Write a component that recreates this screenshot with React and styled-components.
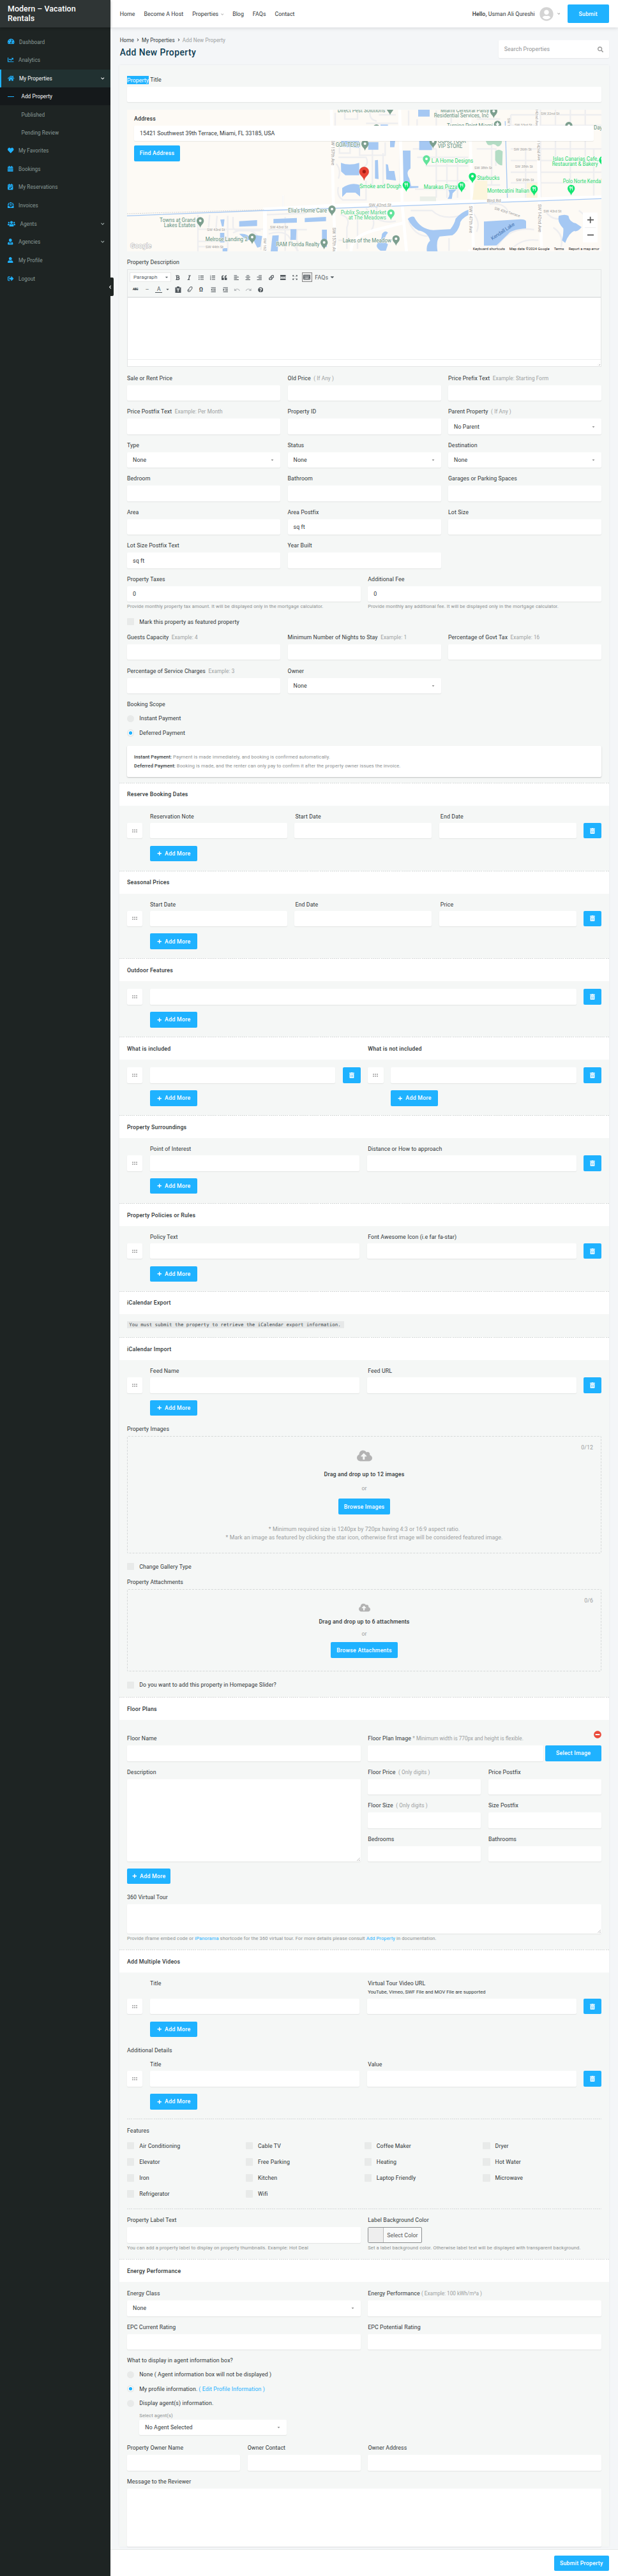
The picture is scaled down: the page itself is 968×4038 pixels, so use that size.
import React from "react";
import styled, { createGlobalStyle, css } from "styled-components";
import {
  FaTachometerAlt, FaChartLine, FaHome, FaHeart, FaCalendarAlt, FaCalendarCheck, FaEnvelopeOpenText,
  FaUsers, FaUserTie, FaUser, FaSignOutAlt, FaSearch, FaCloudUploadAlt, FaTrashAlt, FaPlus,
  FaMinusCircle, FaUserCircle, FaChevronDown, FaChevronRight, FaChevronLeft, FaBold, FaItalic,
  FaListUl, FaListOl, FaQuoteLeft, FaAlignLeft, FaAlignCenter, FaAlignRight, FaLink, FaCaretDown,
  FaOutdent, FaIndent, FaQuestionCircle, FaKeyboard,
} from "react-icons/fa";
import { MdUndo, MdRedo, MdOutlineZoomOutMap } from "react-icons/md";

const blue = "#1fb2ff";
const ink = "#303638";
const mute = "#9b9e9f";

const Global = createGlobalStyle`
  *{box-sizing:border-box}
  body{margin:0;background:#f4f6f8;font-family:Roboto,"Liberation Sans",sans-serif;font-size:8.8px;letter-spacing:.1px;color:${ink}}
  button,input,textarea{font:inherit;letter-spacing:inherit;margin:0}
`;

const Page = styled.div`display:flex;width:968px;height:4038px;overflow:hidden;`;

/* Sidebar */
const Sidebar = styled.aside`position:relative;width:173px;flex:none;background:#1e2423;color:#8b9d9a;font-size:8.2px;letter-spacing:.08px;`;
const Brand = styled.div`height:43px;padding:7px 12px 0;background:#2f3535;color:#fff;font-size:12.4px;font-weight:500;line-height:14.6px;letter-spacing:.06px;box-shadow:0 1px 4px rgba(0,0,0,.3);`;
const Menu = styled.nav`padding-top:8.3px;`;
const MenuItem = styled.div`
  display:flex;align-items:center;height:28.67px;padding:0 9.5px 0 12px;
  svg:first-child{color:${blue};width:${(p) => p.$iw || 9}px;height:9.5px;margin-right:${(p) => p.$gap || 8}px;margin-top:-1px}
  ${(p) => p.$on && css`background:#213131;color:#fff;border-left:2px solid ${blue};padding-left:10px;`}
`;
const MenuCaret = styled(FaChevronDown)`width:5.5px;height:6px;margin-left:auto;color:${(p) => p.color || "#a9b7b5"};`;
const SubItem = styled.div`
  display:flex;align-items:center;height:28.2px;padding-left:33.5px;
  ${(p) => p.$on && css`background:#15191b;color:#fff;padding-left:12px;&::before{content:"";width:10px;height:1px;background:${blue};margin-right:11.5px}`}
`;
const Collapse = styled.div`position:absolute;left:168px;top:435px;width:10px;height:29px;background:#1e2423;border-radius:0 2px 2px 0;color:#fff;display:flex;align-items:center;padding-left:1.5px;svg{width:5px;height:6px}`;

/* Top bar */
const Main = styled.main`flex:1;min-width:0;display:flex;flex-direction:column;`;
const TopBar = styled.header`height:43px;flex:none;background:#fff;box-shadow:0 1px 6px rgba(0,0,0,.13);display:flex;align-items:center;padding:0 14.3px 0 14.7px;letter-spacing:.06px;`;
const TopLinks = styled.nav`display:flex;gap:13.9px;svg{width:4.5px;height:5px;margin-left:3.5px;color:#aaa}`;
const Account = styled.div`display:flex;align-items:center;margin-left:auto;b{font-weight:500}svg{color:#d4d4d4;width:22px;height:22px;margin:0 6px 0 7px}svg+svg{width:4.5px;height:5px;color:#999;margin:0 11.5px 0 0}`;
const Button = styled.button`
  display:inline-flex;align-items:center;justify-content:center;border:0;border-radius:2px;background:${blue};color:#fff;
  font-weight:500;letter-spacing:.24px;height:${(p) => p.$h || 24.5}px;width:${(p) => p.$w}px;margin-top:${(p) => p.$mt || 0}px;flex:none;padding:0;
  svg{width:7.5px;height:7.5px;margin-right:5px}
`;
const PageHead = styled.div`display:flex;justify-content:space-between;height:59px;flex:none;padding:14px 14.3px 0 14.7px;`;
const Crumbs = styled.div`display:flex;align-items:center;height:11px;font-size:8.2px;letter-spacing:.08px;span{color:${mute}}svg{width:4px;height:5px;margin:0 4px}`;
const Title = styled.h1`margin:5px 0 0;font-size:13.9px;line-height:18px;font-weight:500;color:#0c3c52;letter-spacing:.42px;`;
const Search = styled.div`width:173px;height:28px;margin-top:6px;background:#fff;border-radius:2px;box-shadow:0 1px 2px rgba(0,0,0,.07);display:flex;align-items:center;justify-content:space-between;padding:0 9px;color:#8f9293;svg{width:9px;height:9px;color:#999}`;

/* Form card */
const Card = styled.section`width:767px;margin-left:14px;padding-top:16px;background:#f5f7f6;box-shadow:0 0 3px rgba(0,0,0,.06);`;
const Body = styled.div`padding:0 12px;`;
const Label = styled.div`
  height:14px;line-height:14px;margin-bottom:${(p) => (p.$mb === undefined ? 4 : p.$mb)}px;margin-top:${(p) => p.$mt || 0}px;
  padding-left:${(p) => p.$pl || 0}px;white-space:nowrap;
  small{font-size:8.2px;color:${mute};margin-left:${(p) => (p.$tight ? 2.3 : 4.5)}px;letter-spacing:${(p) => (p.$tight ? 0 : 0.11)}px}
`;
const Mark = styled.span`background:${blue};color:#fff;padding:1.5px 0;`;
const surface = css`background:#fff;border:0;border-radius:2px;box-shadow:0 1px 1.5px rgba(0,0,0,.08);`;
const Box = styled.div`${surface}height:${(p) => p.$h || 24.3}px;width:100%;padding:0 9px;display:flex;align-items:center;justify-content:space-between;position:relative;svg{width:5px;height:6px;color:#8a8a8a;margin-right:1px}`;
const Grip = styled.i`position:absolute;right:1px;bottom:1px;width:5px;height:5px;background:repeating-linear-gradient(135deg,transparent 0 1.3px,#aaa 1.3px 2px);clip-path:polygon(100% 0,100% 100%,0 100%);`;
const Columns = styled.div`display:grid;grid-template-columns:${(p) => p.$cols};column-gap:11.5px;row-gap:10.2px;margin-top:${(p) => (p.$mt === undefined ? 10.2 : p.$mt)}px;`;
const Note = styled.div`height:12px;line-height:12px;margin-top:2.3px;font-size:7.56px;letter-spacing:.12px;color:#8b8f90;white-space:nowrap;a{color:${blue}}`;
const Choice = styled.div`
  display:flex;align-items:center;height:12px;margin-top:${(p) => p.$mt || 0}px;white-space:nowrap;a{color:${blue};margin-left:2px}
  &::before{content:"";width:11.4px;height:11.4px;margin-right:7.8px;background:#e8eae9;border-radius:${(p) => (p.$round ? "50%" : "1px")};
  ${(p) => p.$on && css`background:radial-gradient(circle,${blue} 0 2.4px,#fff 2.9px 3.5px,#e8eae9 4.1px);`}}
`;
const InfoBox = styled.div`${surface}box-shadow:0 1px 2px rgba(0,0,0,.22);height:49.3px;margin-top:14px;padding:10.8px 11px;font-size:7.56px;letter-spacing:.12px;line-height:13.8px;color:#8b8f90;b{font-weight:500;color:${ink}}`;
const dash = css`background-image:repeating-linear-gradient(90deg,#d5d8d8 0 2px,transparent 2px 3.2px);background-size:100% 1px;background-repeat:no-repeat;`;
const Head = styled.h2`margin:${(p) => p.$mt}px 0 0;height:36px;padding:1px 12px 0;background-color:#fff;${dash}font-size:8.8px;font-weight:500;letter-spacing:.22px;display:grid;grid-template-columns:${(p) => (p.$split ? "1fr 1fr" : "1fr")};column-gap:11.5px;align-items:center;`;
const Rule = styled.div`height:1px;margin-top:${(p) => p.$mt}px;${dash}`;

const RowGrid = styled.div`display:flex;gap:11.6px;`;
const Handle = styled.div`${surface}width:24.4px;height:24.3px;flex:none;display:grid;grid-template-columns:repeat(3,2px);grid-auto-rows:2px;gap:1px;place-content:center;i{background:#b5b5b5}`;
const Trash = styled(Button)`width:27.7px;height:24.3px;svg{width:8px;height:9px;margin:0}`;
const RowLabels = styled.div`display:grid;grid-template-columns:repeat(${(p) => p.$n},1fr);column-gap:11.6px;padding:0 39.3px 0 36px;margin-top:${(p) => p.$mt}px;`;
const Hint = styled.div`height:12px;line-height:12px;font-size:7.6px;letter-spacing:.03px;margin:.5px 0 4.3px 1.5px;`;
const Indent = styled.div`display:flex;padding-left:36px;height:24.5px;margin-top:11.4px;`;

const AddMore = ({ w = 74 }) => <Button $w={w}><FaPlus />Add More</Button>;
const Repeater = ({ labels = [], inputs, mt = 10, hint }) => {
  const n = inputs || labels.length;
  return (
    <div>
      {labels.length > 0 && (
        <RowLabels $n={n} $mt={mt}>
          {labels.map((l, i) => (
            <div key={l}><Label $mb={hint ? 0 : 3} $pl={i * (n === 2 ? 1.5 : 1)}>{l}</Label>{hint && i === 1 && <Hint>{hint}</Hint>}</div>
          ))}
        </RowLabels>
      )}
      <RowGrid>
        <Handle>{[0, 1, 2, 3, 4, 5].map((i) => <i key={i} />)}</Handle>
        {Array.from({ length: n }, (_, i) => <Box key={i} />)}
        <Trash><FaTrashAlt /></Trash>
      </RowGrid>
      <Indent><AddMore /></Indent>
    </div>
  );
};
const Field = ({ label, small, value, select, h, grip, note, tight }) => (
  <div>
    <Label $tight={tight}>{label}{small && <small>{small}</small>}</Label>
    <Box $h={h}>{value}{select && <FaCaretDown />}{grip && <Grip />}</Box>
    {note && <Note>{note}</Note>}
  </div>
);

/* Map */
const MapBox = styled.div`position:relative;height:222px;margin-top:11.7px;padding:7.5px 12px 0 11px;overflow:hidden;`;
const MapSvg = styled.svg`position:absolute;left:0;top:0;width:100%;height:100%;font-family:Roboto,sans-serif;font-size:25px;letter-spacing:0;`;
const MapForm = styled.div`position:relative;font-weight:500;letter-spacing:.2px;`;
const AddressBox = styled(Box)`font-weight:400;letter-spacing:.05px;`;

const Pin = ({ x, y, c = "#7d9f8f" }) => (
  <g transform={`translate(${x} ${y})`}>
    <path d="M0 33C-3 20-17 14-17 0A17 17 0 0 1 17 0C17 14 3 20 0 33Z" fill={c} />
    <circle r="6" fill="#fff" />
  </g>
);
const Fork = ({ x, y, c = "#12e670" }) => (
  <g transform={`translate(${x} ${y})`}>
    <path d="M0 33C-3 20-17 14-17 0A17 17 0 0 1 17 0C17 14 3 20 0 33Z" fill={c} />
    <path d="M-7-9v6q0 3 3 3t3-3v-6M-4-9v18M6 9V-9q-4 3-4 9h4" fill="none" stroke="#fff" strokeWidth="2.4" />
  </g>
);
const T = ({ x, y, w, children, c = "#5f9080", s, r }) => (
  <text x={x} y={y} fill={c} fontSize={s} textLength={w} lengthAdjust="spacingAndGlyphs" transform={r ? `rotate(${r} ${x} ${y})` : undefined}
    stroke="#fdfaf5" strokeWidth="4" paintOrder="stroke">{children}</text>
);
const street = "#a0a0a0";
const green = "#1fd873";

const MapArt = () => (
  <MapSvg viewBox="597 516 2229 666" preserveAspectRatio="none">
    <rect x="597" y="516" width="2229" height="666" fill="#fdfaf5" />
    <g fill="none" stroke="#eeeef0" strokeWidth="7">
      <path d="M930 1010v172M985 1010l-5 60M1020 1015l-5 60M1070 1015v165M930 1078h310M930 1135h140M930 1160h120M1095 1020v50q5 15 30 15h100M1250 1010l190-8M1262 1080h180M1340 1020v160M1395 1080v100M1330 920v60M1262 1100q80-20 100 20t40 60M1095 1095q60-30 100 0t30 80" />
      <path d="M1575 530v60M1620 520v40h60v-30M1740 520q-10 40 30 50M1780 540h80M1720 580h150M1595 670v50h50v-40M1690 670v60h120v-60M1590 740h130q15 30-10 45M1590 840q15-40-10-70M1720 850v90h-110q-30-20-20-60M1750 700v180M1800 720v150h80v-170" />
      <path d="M1920 520v70M1960 560v30M2050 520v70M2120 520v60M1940 700h110M1960 740h240M2000 780h200M2050 850h150M1950 890h240M2050 700v230M2100 770v160M2150 760v170" />
      <path d="M2240 560h110M2240 700h90v80M2230 830h110M2230 870h120M2310 670v200M2400 540h430M2400 590h430M2400 640v-100M2470 700v230M2540 516v420M2610 516v230M2680 516v400M2750 516v220M2400 700h430M2400 755h430M2400 810h430M2400 860h430M2790 700v230" />
      <path d="M1600 1010q50 10 30 60v100M1680 1030v140M1720 980q60 60 20 110M1770 970v60q50 20 90 10M1590 1130h100M1930 990h100q50 50 150 20M1920 1040q30 70 90 70M2110 1120v60M2220 1000q40 40 20 90M2330 1170q60-110 180-90M2400 1180q40-60 130-50M2560 990q40 60 110 30M2600 1070q60 40 30 110M2720 990q70 50 50 110M2300 960q70-10 90 40" />
    </g>
    <g fill="none" stroke="#fff" strokeWidth="14">
      <path d="M1245 1182V985L1560 968 2826 928" strokeWidth="18" />
      <path d="M1557 516l10 460 10 206M1878 516l12 450 20 216M2207 516l10 420 8 246M2526 516l8 420 12 246M1650 1182q-5-70 110-100l140-35M2200 1180l110-10" />
      <path d="M1330 918v66" strokeWidth="4" />
    </g>
    <g fill="none" stroke="#a5c8f3" strokeWidth="4">
      <path d="M597 1015L1240 990 1560 980 2826 934M2374 570l10 360" />
    </g>
    <path d="M597 1005L850 998 1240 986" fill="none" stroke="#d3d3d3" strokeWidth="3" strokeDasharray="6 4" />
    <g fill="#a5c8f3">
      <path d="M1035 1033l20-2-4 34h-8zM1124 1040l84-5v28l-84 3zM1034 1095h20v45h-20zM1124 1100q40-5 50 20l20-15 38 5-8 50-15 5-20-40-30 5zM1046 1167h22v15h-22zM1285 1030l110-5v22l-110 3zM1280 1108l30-2-5 76h-33zM1365 1078h28l-2 50h-26zM1432 1025l100-5v20l-100 5z" />
      <path d="M1513 1080h23v82h-23zM1965 516h54v32h-54zM1788 586h35v8h-35zM1602 660h85v35l-85-5zM1730 668h48v36h-48zM1833 662h24l-4 30h-20zM1970 663h60v43h-60z" />
      <path d="M1602 766q40 15 86 0v58h-65l-20-18zM1608 884q40-30 84-14v54l-22-18h-42l-20 20zM1762 754l14-2 3 90-17-2zM1813 772l10 2 5 30h25l8 45-46-5zM1893 708h36v85q-25 15-5 48l8 34h34v8l-50 3q-18-6-20-28z" />
      <path d="M1916 1030q15-15 30-10 30 60 90 62 35-2 80-4 20-25 25-50 25-30 60-42v25q-40 20-40 45-10 35-35 50l-60 6q-18 20-10 70h-50q-5-30 15-50-10-40-55-48-30-15-50-54zM2274 1042l160-10q40-3 38 12v30q-70 5-85 28l-54 52-59 1zM2626 1015q30-10 45 0 5 30 35 35l27 18q-20 25-35 18-25 10-42 56l-15-12q8-30 6-56-30-30-21-59zM1795 1100q15-20 28-6-30 35 0 55l-10 30h-25q-30-20-10-40 15-10 17-39zM2107 893l42-6-22 22-4 26h-20q16-20 4-42z" />
    </g>
    <path d="M2283 662h75v10q-10 20-22 16-15-16-28-6-20 5-25-20zM2327 712q15-15 35 0l-2 66q-20 0-33-25z" fill="#b3dcc4" />
    <path d="M2232 850h58v90h-70zM2475 860h50v70h-50z" fill="#fcf5dd" />
    <path d="M1973 924h76v22h-76z" fill="#eaefe8" />
    <g>
      <T x={750} y={1044} w={168}>Towns at Grand</T><T x={770} y={1068} w={148}>Lakes Estates</T>
      <T x={965} y={1133} w={198}>Melrose Landing 2</T><T x={1354} y={1000} w={182}>Elia's Home Care</T><T x={1298} y={1157} w={203}>RAM Florida Realty</T>
      <T x={973} y={1086} w={84} c={street} s={18}>SW 43rd St</T><T x={966} y={1166} w={84} c={street} s={18}>SW 44th St</T><T x={1269} y={1075} w={84} c={street} s={18}>SW 43rd St</T>
      <T x={1240} y={1120} w={60} c={street} s={18} r={90}>SW 162</T>
      <T x={1586} y={527} w={224}>Direct Pest Solutions</T><T x={2070} y={529} w={228}>Miami Cerebral Palsy</T><T x={2039} y={553} w={257}>Residential Services, Inc</T>
      <T x={2100} y={601} w={216}>Turning Point Miami</T><T x={1577} y={691} w={116}>GOA-TECH</T><T x={2057} y={671} w={132}>GOAG TOUR</T><T x={2057} y={695} w={116}>VIP STORE</T><T x={2790} y={608} w={40}>Day</T>
      <T x={2027} y={764} w={196} c={green}>L.A Home Designs</T><T x={1690} y={886} w={196} c={green}>Smoke and Dough</T><T x={1991} y={888} w={158} c={green}>Marakas Pizza</T>
      <T x={2242} y={846} w={106} c={green}>Starbucks</T><T x={2289} y={905} w={198} c={green}>Montecatini Italian</T><T x={2598} y={755} w={213} c={green}>Islas Canarias Cafe,</T>
      <T x={2594} y={780} w={216} c={green}>Restaurant &amp; Bakery</T><T x={2645} y={861} w={190} c={green}>Polo Norte Kendall</T>
      <T x={1601} y={1007} w={214} c="#4ed58b">Publix Super Market</T><T x={1637} y={1031} w={178} c="#4ed58b">at The Meadows</T><T x={1610} y={1140} w={229}>Lakes of the Meadow</T>
      <T x={1733} y={973} w={106} c={street} s={21}>SW 42nd St</T><T x={2288} y={952} w={66} c={street} s={21}>Bird Rd</T>
      <T x={2541} y={540} w={88} c={street} s={18}>SW 32nd St</T><T x={2418} y={595} w={82} c={street} s={18}>SW 33rd St</T><T x={2414} y={707} w={84} c={street} s={18}>SW 36th St</T>
      <T x={2420} y={788} w={84} c={street} s={18}>SW 38th St</T><T x={2229} y={795} w={84} c={street} s={18}>SW 38th St</T><T x={2425} y={852} w={84} c={street} s={18}>SW 39th St</T><T x={2554} y={1000} w={84} c={street} s={18}>SW 43rd St</T>
      <T x={2322} y={985} w={125} c={street} s={18} r={17}>SW 43rd Terrace</T>
      <T x={1556} y={655} w={122} c={street} s={19} r={90}>SW 157th Ave</T><T x={1564} y={1070} w={125} c={street} s={19} r={90}>SW 157th Ave</T><T x={2206} y={968} w={128} c={street} s={19} r={90}>SW 147th Ave</T>
      <T x={2530} y={960} w={132} c={street} s={19} r={90}>SW 142nd Ave</T><T x={2523} y={640} w={115} c={street} s={18} r={88}>SW 142nd Ave</T><T x={2517} y={480} w={115} c={street} s={18} r={90}>SW 142nd Ave</T><T x={2385} y={555} w={60} c={street} s={18} r={90}>SW 147</T>
      <text x={2314} y={1130} fill="#4a78b5" fontSize="24" textLength="128" transform="rotate(-34 2314 1130)">Kendall Lake</text>
    </g>
    <Pin x={941} y={1038} /><Pin x={1185} y={1115} /><Pin x={1560} y={983} /><Pin x={1523} y={1140} /><Pin x={1861} y={1123} /><Pin x={1833} y={508} /><Pin x={2320} y={523} />
    <Pin x={1715} y={676} /><Pin x={2035} y={665} /><Pin x={1769} y={602} /><Pin x={2338} y={585} /><Pin x={2673} y={590} />
    <path d="M2338 574v18M2329 583h18" stroke="#fff" strokeWidth="4" />
    <Fork x={1909} y={869} /><Fork x={2169} y={872} /><Fork x={2510} y={888} /><Fork x={2684} y={886} /><Fork x={2832} y={752} /><Pin x={2220} y={829} c="#12e670" /><Pin x={2004} y={747} c="#63e39b" /><Pin x={1837} y={1002} c="#63e39b" />
    <path d="M1711 848C1708 830 1689 825 1689 807A22 22 0 0 1 1733 807C1733 825 1714 830 1711 848Z" fill="#ea4335" stroke="#c5352a" strokeWidth="1.5" /><circle cx="1711" cy="807" r="8" fill="#a01b12" />
    <text x="612" y="1168" fontSize="32" fontWeight="500" fill="#fff" stroke="#aaa" strokeWidth="3" paintOrder="stroke" textLength="100">Google</text>
    <rect x="2210" y="1160" width="616" height="22" fill="#fdfaf5" opacity=".75" />
    <g fontSize="17" fill="#222"><text x="2222" y="1176" textLength="151">Keyboard shortcuts</text><text x="2393" y="1176" textLength="189">Map data ©2024 Google</text><text x="2603" y="1176" textLength="47">Terms</text><text x="2672" y="1176" textLength="144">Report a map error</text></g>
    <rect x="2739" y="1000" width="69" height="140" rx="3" fill="#fff" />
    <path d="M2760 1034h30M2774 1019v30M2760 1105h30" stroke="#555" strokeWidth="5" /><path d="M2748 1070h51" stroke="#e6e6e6" strokeWidth="2" />
  </MapSvg>
);

/* Rich text editor */
const Editor = styled.div`height:153.1px;border:1px solid #e3e5e5;background:#fff;position:relative;`;
const Tools = styled.div`height:44px;padding:4px 3px;background:#f5f7f6;border-bottom:2px solid #e3e5e5;color:#555d63;`;
const ToolRow = styled.div`display:flex;align-items:center;height:${(p) => p.$h}px;svg{flex:none}`;
const Tool = styled.span`display:flex;justify-content:center;align-items:center;width:${(p) => p.$w || 18.35}px;height:14px;flex:none;font-size:7px;color:${(p) => (p.$dim ? "#b4b8ba" : "#50575c")};svg{width:${(p) => p.$s || 8.5}px;height:${(p) => p.$s || 8.5}px}${(p) => p.$on && css`border:1px solid #888;width:16px;height:15px;margin:0 4.5px 0 2px;background:#ebebeb;`}`;
const ParaSelect = styled.div`width:65px;height:15px;background:#fff;border:1px solid #e8e8e8;display:flex;align-items:center;justify-content:space-between;padding:0 3px 0 5px;margin-right:1px;font-size:8px;svg{width:6px;height:7px}`;
const TinyLabel = styled.b`font-size:4.6px;letter-spacing:-.2px;text-decoration:line-through;`;
const Ink = styled.span`border-bottom:1.3px solid #50575c;width:11px;text-align:center;font-size:8.5px;line-height:9px;`;
const Omega = styled.b`font-size:9.5px;line-height:10px;`;
const StatusLine = styled.div`position:absolute;left:0;right:0;bottom:0;height:11.5px;border-top:1px solid #eceeee;`;

/* Uploads */
const CodeRow = styled.div`height:11.7px;margin-top:11px;display:flex;`;
const Code = styled.div`height:11.7px;line-height:11.7px;width:340px;padding-left:3.3px;background:#e6e8e8;font-family:"DejaVu Sans Mono","Liberation Mono",monospace;font-size:7.44px;letter-spacing:0;white-space:nowrap;color:#444b4e;`;
const Drop = styled.div`position:relative;height:${(p) => p.$h}px;border:1px dashed #d5d8d8;border-radius:2px;display:flex;flex-direction:column;align-items:center;padding-top:${(p) => p.$pt}px;b{font-weight:500;letter-spacing:.18px;line-height:12px;margin-top:${(p) => p.$g1}px}em{font-style:normal;color:${mute};line-height:12px;margin:${(p) => p.$g2}px 0 ${(p) => p.$g3}px}p{margin:17.5px 0 0;color:${mute};line-height:13px;text-align:center;letter-spacing:.06px}`;
const Count = styled.span`position:absolute;right:12px;top:11px;color:${mute};line-height:12px;`;
const ImageRow = styled.div`display:flex;gap:3.5px;`;
const Relative = styled.div`position:relative;`;
const Remove = styled(FaMinusCircle)`position:absolute;right:0;top:-5.5px;width:12px;height:12px;color:#ea4a3b;`;
const Stack = styled.div`display:grid;grid-template-columns:1fr 1fr;column-gap:11.5px;row-gap:10.2px;`;
const FeatureGrid = styled.div`display:grid;grid-template-columns:repeat(4,185.8px);row-gap:13.1px;margin-top:11px;`;
const ColorBtn = styled.div`display:flex;align-items:center;width:84.5px;height:24.3px;border:1px solid #8c8f90;border-radius:2px;color:#555;background:#f8f9f9;i{width:23.5px;height:100%;background:#eee;border-right:1px solid #bbb;margin-right:5.5px}`;
const AgentPick = styled.div`margin:7.5px 0 0 19.3px;width:230.5px;`;
const Footer = styled.footer`height:42px;flex:none;margin-top:auto;background:#fff;border-top:1px solid #e8eaea;display:flex;justify-content:flex-end;padding:8.5px 14.3px 0;position:relative;`;

const half = "1fr 1fr";
const third = "1fr 1fr 1fr";
const menu = [
  [FaHeart, "My Favorites", 9.5], [FaCalendarAlt, "Bookings", 8.5], [FaCalendarCheck, "My Reservations", 8.5],
  [FaEnvelopeOpenText, "Invoices", 9.5], [FaUsers, "Agents", 12, 7.5, true], [FaUserTie, "Agencies", 8.5, 0, true],
  [FaUser, "My Profile", 8.5], [FaSignOutAlt, "Logout", 9.5],
];
const features = ["Air Conditioning", "Cable TV", "Coffee Maker", "Dryer", "Elevator", "Free Parking", "Heating", "Hot Water", "Iron", "Kitchen", "Laptop Friendly", "Microwave", "Refrigerator", "Wifi"];

export default function App() {
  return (
    <Page>
      <Global />
      <Sidebar>
        <Brand>Modern – Vacation<br />Rentals</Brand>
        <Menu>
          <MenuItem $iw={10.5} $gap={7.5}><FaTachometerAlt />Dashboard</MenuItem>
          <MenuItem $iw={9.5} $gap={7.5}><FaChartLine />Analytics</MenuItem>
          <MenuItem $on $iw={10.5} $gap={7.5}><FaHome />My Properties<MenuCaret color="#fff" /></MenuItem>
          <SubItem $on>Add Property</SubItem>
          <SubItem>Published</SubItem>
          <SubItem>Pending Review</SubItem>
          {menu.map(([Icon, text, w, g, caret]) => (
            <MenuItem key={text} $iw={w} $gap={g || 17 - w}><Icon />{text}{caret && <MenuCaret />}</MenuItem>
          ))}
        </Menu>
        <Collapse><FaChevronLeft /></Collapse>
      </Sidebar>
      <Main>
        <TopBar>
          <TopLinks><span>Home</span><span>Become A Host</span><span>Properties<FaChevronDown /></span><span>Blog</span><span>FAQs</span><span>Contact</span></TopLinks>
          <Account><b>Hello,</b>&nbsp;Usman Ali Qureshi<FaUserCircle /><FaChevronDown /></Account>
          <Button $w={65} $h={28.5}>Submit</Button>
        </TopBar>
        <PageHead>
          <div>
            <Crumbs>Home<FaChevronRight />My Properties<FaChevronRight /><span>Add New Property</span></Crumbs>
            <Title>Add New Property</Title>
          </div>
          <Search>Search Properties<FaSearch /></Search>
        </PageHead>
        <Card>
          <Body>
            <Label><Mark>Property</Mark> Title</Label>
            <Box />
            <MapBox>
              <MapArt />
              <MapForm>
                <Label $mb={3.5}>Address</Label>
                <AddressBox>15421 Southwest 39th Terrace, Miami, FL 33185, USA</AddressBox>
                <Button $w={72} $mt={6.8}>Find Address</Button>
              </MapForm>
            </MapBox>
            <Label $mt={10.4}>Property Description</Label>
            <Editor>
              <Tools>
                <ToolRow $h={15}>
                  <ParaSelect>Paragraph<FaCaretDown /></ParaSelect>
                  {[FaBold, FaItalic, FaListUl, FaListOl, FaQuoteLeft, FaAlignLeft, FaAlignCenter, FaAlignRight, FaLink].map((I, i) => <Tool key={i}><I /></Tool>)}
                  <Tool><svg viewBox="0 0 9 9"><path d="M0 0h9v3H0zM0 6h9v3H0zM0 4h2v1H0zM3.5 4h2v1h-2zM7 4h2v1H7z" fill="currentColor" /></svg></Tool>
                  <Tool $s={10}><MdOutlineZoomOutMap /></Tool>
                  <Tool $on $s={11}><FaKeyboard /></Tool>
                  FAQs&nbsp;<FaCaretDown />
                </ToolRow>
                <ToolRow $h={23}>
                  <Tool><TinyLabel>ABC</TinyLabel></Tool><Tool>—</Tool><Tool><Ink>A</Ink></Tool>
                  <Tool $w={9} $s={7}><FaCaretDown /></Tool>
                  <Tool $w={23} $s={10}><svg viewBox="0 0 10 10"><path d="M.5 1.5h2.7V0h3.6v1.5h2.7V10h-9z" fill="currentColor" /><path d="M2.7 3.8h4.6M5 3.8v4.4" stroke="#f5f7f6" strokeWidth="1.3" /></svg></Tool>
                  <Tool $w={14.5} $s={9}><svg viewBox="0 0 9 9"><path d="M5 .8h2.8L8 3 4.5 8H1.6L1 6zM1.2 5.8h3" fill="none" stroke="currentColor" /></svg></Tool>
                  <Tool $w={21}><Omega>Ω</Omega></Tool>
                  <Tool><FaOutdent /></Tool><Tool><FaIndent /></Tool><Tool $dim $s={10.5}><MdUndo /></Tool><Tool $dim $s={10.5}><MdRedo /></Tool><Tool><FaQuestionCircle /></Tool>
                </ToolRow>
              </Tools>
              <StatusLine><Grip /></StatusLine>
            </Editor>
            <Columns $cols={third} $mt={10.5}>
              <Field label="Sale or Rent Price" /><Field label="Old Price" small="( If Any )" /><Field label="Price Prefix Text" small="Example: Starting Form" />
              <Field label="Price Postfix Text" small="Example: Per Month" /><Field label="Property ID" /><Field label="Parent Property" small="( If Any )" value="No Parent" select />
              <Field label="Type" value="None" select /><Field label="Status" value="None" select /><Field label="Destination" value="None" select />
              <Field label="Bedroom" /><Field label="Bathroom" /><Field label="Garages or Parking Spaces" />
              <Field label="Area" /><Field label="Area Postfix" value="sq ft" /><Field label="Lot Size" />
              <Field label="Lot Size Postfix Text" value="sq ft" /><Field label="Year Built" />
            </Columns>
            <Columns $cols={half}>
              <Field label="Property Taxes" value="0" note="Provide monthly property tax amount. It will be displayed only in the mortgage calculator." />
              <Field label="Additional Fee" value="0" note="Provide monthly any additional fee. It will be displayed only in the mortgage calculator." />
            </Columns>
            <Choice $mt={11.2}>Mark this property as featured property</Choice>
            <Columns $cols={third} $mt={11.5}>
              <Field label="Guests Capacity" small="Example: 4" /><Field label="Minimum Number of Nights to Stay" small="Example: 1" /><Field label="Percentage of Govt Tax" small="Example: 16" />
              <Field label="Percentage of Service Charges" small="Example: 3" /><Field label="Owner" value="None" select />
            </Columns>
            <Label $mt={10.2} $mb={9.3}>Booking Scope</Label>
            <Choice $round>Instant Payment</Choice>
            <Choice $round $on $mt={10.5}>Deferred Payment</Choice>
            <InfoBox>
              <div><b>Instant Payment:</b> Payment is made immediately, and booking is confirmed automatically.</div>
              <div><b>Deferred Payment:</b> Booking is made, and the renter can only pay to confirm it after the property owner issues the invoice.</div>
            </InfoBox>
          </Body>
          <Head $mt={8.7}>Reserve Booking Dates</Head>
          <Body><Repeater labels={["Reservation Note", "Start Date", "End Date"]} /></Body>
          <Head $mt={14.6}>Seasonal Prices</Head>
          <Body><Repeater labels={["Start Date", "End Date", "Price"]} /></Body>
          <Head $mt={14.6}>Outdoor Features</Head>
          <Body><Columns $cols="1fr" $mt={12}><Repeater inputs={1} /></Columns></Body>
          <Head $mt={14.7} $split><span>What is included</span><span>What is not included</span></Head>
          <Body><Columns $cols={half} $mt={12}><Repeater inputs={1} /><Repeater inputs={1} /></Columns></Body>
          <Head $mt={14.7}>Property Surroundings</Head>
          <Body><Repeater labels={["Point of Interest", "Distance or How to approach"]} /></Body>
          <Head $mt={14.6}>Property Policies or Rules</Head>
          <Body><Repeater labels={["Policy Text", "Font Awesome Icon (i.e far fa-star)"]} /></Body>
          <Head $mt={14.6}>iCalendar Export</Head>
          <Body><CodeRow><Code>You must submit the property to retrieve the iCalendar export information.</Code></CodeRow></Body>
          <Head $mt={13.8}>iCalendar Import</Head>
          <Body>
            <Repeater labels={["Feed Name", "Feed URL"]} />
            <Label $mt={13.5}>Property Images</Label>
            <Drop $h={183.7} $pt={18.5} $g1={10.5} $g2={10.5} $g3={10}>
              <Count>0/12</Count>
              <FaCloudUploadAlt size={24} color="#b3b3b3" />
              <b>Drag and drop up to 12 images</b><em>or</em><Button $w={81.5}>Browse Images</Button>
              <p>* Minimum required size is 1240px by 720px having 4:3 or 16:9 aspect ratio.<br />* Mark an image as featured by clicking the star icon, otherwise first image will be considered featured image.</p>
            </Drop>
            <Choice $mt={15}>Change Gallery Type</Choice>
            <Label $mt={11.8}>Property Attachments</Label>
            <Drop $h={129} $pt={19} $g1={6.5} $g2={7} $g3={7.5}>
              <Count>0/6</Count>
              <FaCloudUploadAlt size={18} color="#b3b3b3" />
              <b>Drag and drop up to 6 attachments</b><em>or</em><Button $w={105}>Browse Attachments</Button>
            </Drop>
            <Choice $mt={15}>Do you want to add this property in Homepage Slider?</Choice>
          </Body>
          <Head $mt={12.8}>Floor Plans</Head>
          <Body>
            <Columns $cols={half} $mt={22}>
              <Field label="Floor Name" />
              <Relative>
                <Remove />
                <Label $tight>Floor Plan Image<small>* Minimum width is 770px and height is flexible.</small></Label>
                <ImageRow><Box /><Button $w={88} $h={24.3}>Select Image</Button></ImageRow>
              </Relative>
              <Field label="Description" h={129.3} grip />
              <Stack>
                <Field label="Floor Price" small="( Only digits )" /><Field label="Price Postfix" />
                <Field label="Floor Size" small="( Only digits )" /><Field label="Size Postfix" />
                <Field label="Bedrooms" /><Field label="Bathrooms" />
              </Stack>
            </Columns>
            <Columns $cols="1fr" $mt={10.8}><AddMore w={68} /></Columns>
            <Columns $cols="1fr" $mt={13.4}>
              <Field label="360 Virtual Tour" h={46} grip note={<>Provide iframe embed code or <a>iPanorama</a> shortcode for the 360 virtual tour. For more details please consult <a>Add Property</a> in documentation.</>} />
            </Columns>
          </Body>
          <Head $mt={11.2}>Add Multiple Videos</Head>
          <Body>
            <Repeater labels={["Title", "Virtual Tour Video URL"]} hint="YouTube, Vimeo, SWF File and MOV File are supported" />
            <Label $mt={13.6} $mb={8.7}>Additional Details</Label>
            <Repeater labels={["Title", "Value"]} mt={0} />
            <Rule $mt={14.6} />
            <Label $mt={10.5} $mb={0}>Features</Label>
            <FeatureGrid>{features.map((f) => <Choice key={f}>{f}</Choice>)}</FeatureGrid>
            <Rule $mt={17.2} />
            <Columns $cols={half} $mt={10.2}>
              <Field label="Property Label Text" note="You can add a property label to display on property thumbnails. Example: Hot Deal" />
              <div><Label>Label Background Color</Label><ColorBtn><i />Select Color</ColorBtn><Note>Set a label background color. Otherwise label text will be displayed with transparent background.</Note></div>
            </Columns>
          </Body>
          <Head $mt={11.3}>Energy Performance</Head>
          <Body>
            <Columns $cols={half} $mt={11}>
              <Field label="Energy Class" value="None" select /><Field label="Energy Performance" small="( Example: 100 kWh/m²a )" tight />
              <Field label="EPC Current Rating" /><Field label="EPC Potential Rating" />
            </Columns>
            <Label $mt={10.2} $mb={9}>What to display in agent information box?</Label>
            <Choice $round>None ( Agent information box will not be displayed )</Choice>
            <Choice $round $on $mt={10.5}>My profile information. <a>( Edit Profile Information )</a></Choice>
            <Choice $round $mt={10.5}>Display agent(s) information.</Choice>
            <AgentPick><Note>Select agent(s)</Note><Box>No Agent Selected<FaCaretDown /></Box></AgentPick>
            <Columns $cols="177.2px 177.2px 1fr" $mt={13.2}>
              <Field label="Property Owner Name" /><Field label="Owner Contact" /><Field label="Owner Address" />
            </Columns>
            <Columns $cols="1fr"><Field label="Message to the Reviewer" h={91.5} /></Columns>
          </Body>
        </Card>
        <Footer><Button $w={86}>Submit Property</Button></Footer>
      </Main>
    </Page>
  );
}
